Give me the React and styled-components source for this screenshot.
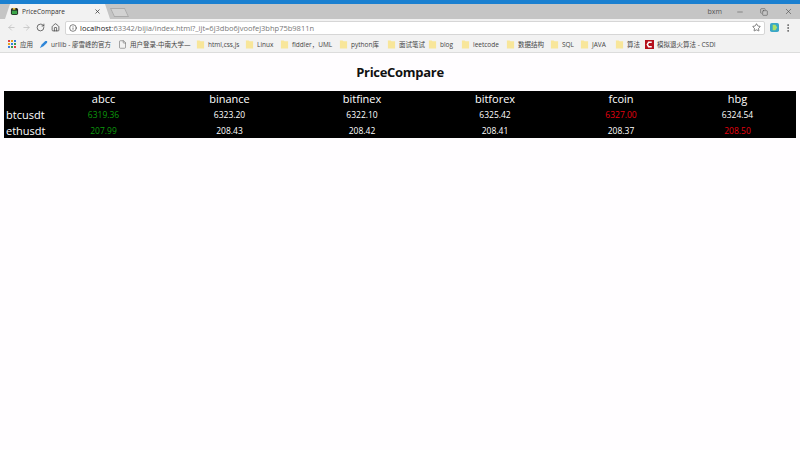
import React from "react";
import styled, { createGlobalStyle } from "styled-components";
import { Star, MoreVertical, RotateCw, Home, ArrowLeft, ArrowRight, Info, Minus, X, Copy, File } from "lucide-react";

const GlobalStyle = createGlobalStyle`
  html, body {
    margin: 0;
    padding: 0;
    background: #fffdff;
    font-family: "Open Sans", "Noto Sans CJK SC", sans-serif;
  }
`;

const Page = styled.div`
  width: 800px;
  height: 450px;
  overflow: hidden;
  display: flex;
  flex-direction: column;
`;
const TitleBar = styled.div`
  height: 15px;
  background: #c5c5c5;
  border-top: 4px solid #1b80d0;
  display: flex;
  align-items: flex-end;
  padding-left: 5px;
`;
const Tab = styled.div`
  width: 105px;
  height: 15px;
  background: #f2f2f2;
  clip-path: polygon(0 100%, 5px 0, 100px 0, 100% 100%);
  display: flex;
  align-items: center;
  padding: 0 9px 0 5px;
  box-sizing: border-box;
  font-size: 6.5px;
  color: #333;
`;
const TabIcon = styled.svg`
  width: 9px;
  height: 9px;
  margin: 0 3px 0 0;
  flex: none;
`;
const TabTitle = styled.span`
  flex: 1;
  white-space: nowrap;
`;
const NewTab = styled.div`
  width: 13px;
  height: 7px;
  margin: 0 0 2px 2px;
  background: #d2d2d2;
  border: 1px solid #aaa;
  transform: skewX(25deg);
`;
const WindowControls = styled.div`
  margin-left: auto;
  height: 15px;
  display: flex;
  align-items: center;
  color: #444;
`;
const UserName = styled.span`
  font-size: 7px;
  color: #555;
  margin-right: 6px;
`;
const ControlButton = styled.span`
  width: 24px;
  display: flex;
  justify-content: center;
`;
const Toolbar = styled.div`
  height: 17px;
  background: #f2f2f2;
  display: flex;
  align-items: center;
  padding-left: 7px;
`;
const NavButton = styled.span`
  width: 14.5px;
  display: flex;
  justify-content: flex-start;
  color: ${(p) => (p.$off ? "#bdbdbd" : "#444")};
`;
const Omnibox = styled.div`
  width: 700px;
  height: 14px;
  background: #fff;
  border: 1px solid #d6d6d6;
  border-radius: 2px;
  box-sizing: border-box;
  display: flex;
  align-items: center;
  padding: 0 3px;
  font-size: 7.5px;
  color: #777;
  white-space: nowrap;
`;
const Host = styled.span`
  color: #222;
  margin-left: 3px;
`;
const OmniStar = styled.span`
  margin-left: auto;
  display: flex;
  color: #444;
`;
const Extension = styled.svg`
  width: 9px;
  height: 9px;
  margin-left: 5px;
`;
const MenuDots = styled.span`
  display: flex;
  margin-left: 4px;
  color: #555;
`;
const BookmarkBar = styled.div`
  height: 16px;
  background: #f2f2f2;
  border-bottom: 1px solid #dcdcdc;
  display: flex;
  align-items: center;
  padding-left: 8px;
  font-size: 6.5px;
  color: #444;
  white-space: nowrap;
`;
const Bookmark = styled.div`
  width: ${(p) => p.$w}px;
  display: flex;
  align-items: center;
  gap: 3px;
  flex: none;
`;
const Folder = styled.svg`
  width: 9px;
  height: 9px;
  flex: none;
`;
const Main = styled.main`
  padding: 0 4px;
`;
const Heading = styled.h1`
  margin: 10px 0 9px;
  font-size: 13px;
  line-height: 19px;
  letter-spacing: -0.3px;
  font-weight: 700;
  color: #111;
  text-align: center;
`;
const PriceTable = styled.table`
  width: 792px;
  height: 47px;
  border-collapse: collapse;
  table-layout: fixed;
  background: #000;
  color: #fff;

  tr > :last-child {
    padding-left: 7px;
  }
`;
const HeadCell = styled.th`
  padding: 0;
  height: 16px;
  font-size: 11px;
  font-weight: 400;
  line-height: 16px;
  text-align: center;
`;
const SymbolCell = styled.td`
  padding: 0 0 0 2px;
  height: 15px;
  font-size: 11px;
  line-height: 15px;
`;
const PriceCell = styled.td`
  padding: 0;
  height: 15px;
  font-size: 8.5px;
  line-height: 15px;
  text-align: center;
  color: ${(p) => (p.$tone === "low" ? "#0c9a0c" : p.$tone === "high" ? "#e8000f" : "#fff")};
`;

const columns = [
  { name: "abcc", width: 103 },
  { name: "binance", width: 149 },
  { name: "bitfinex", width: 116 },
  { name: "bitforex", width: 150 },
  { name: "fcoin", width: 102 },
  { name: "hbg", width: 124 },
];

const rows = [
  {
    symbol: "btcusdt",
    prices: [
      ["6319.36", "low"],
      ["6323.20"],
      ["6322.10"],
      ["6325.42"],
      ["6327.00", "high"],
      ["6324.54"],
    ],
  },
  {
    symbol: "ethusdt",
    prices: [
      ["207.99", "low"],
      ["208.43"],
      ["208.42"],
      ["208.41"],
      ["208.37"],
      ["208.50", "high"],
    ],
  },
];

const bookmarks = [
  { label: "urllib - 廖雪峰的官方", width: 79, icon: "rocket" },
  { label: "用户登录-中南大学—", width: 78, icon: "file" },
  { label: "html,css,js", width: 49 },
  { label: "Linux", width: 35 },
  { label: "fiddler，UML", width: 59 },
  { label: "python库", width: 48 },
  { label: "面试笔试", width: 41 },
  { label: "blog", width: 33 },
  { label: "leetcode", width: 45 },
  { label: "数据结构", width: 44 },
  { label: "SQL", width: 30 },
  { label: "JAVA", width: 35 },
  { label: "算法", width: 30 },
  { label: "模拟退火算法 - CSDI", width: 72, icon: "csdn" },
];

const BookmarkIcon = ({ type }) => {
  if (type === "rocket") {
    return (
      <Folder viewBox="0 0 10 10">
        <path d="M1 9 L3 5 L7 1 L9 1 L9 3 L5 7 Z" fill="#2f86d8" />
      </Folder>
    );
  }
  if (type === "file") return <File size={9} strokeWidth={1.5} color="#666" />;
  if (type === "csdn") {
    return (
      <Folder viewBox="0 0 10 10">
        <rect width="10" height="10" fill="#b5101c" />
        <path d="M7.5 2.6 H4 L2.6 5 L4 7.4 H7.5" fill="none" stroke="#fff" strokeWidth="1.6" />
      </Folder>
    );
  }
  return (
    <Folder viewBox="0 0 10 10">
      <path d="M1 0.5 H4 L5 1.5 H9 V9.5 H1 Z" fill="#f8e69a" />
    </Folder>
  );
};

const AppsIcon = () => (
  <Folder viewBox="0 0 9 9">
    {[0, 3, 6].map((y, r) =>
      [0, 3, 6].map((x, c) => (
        <rect
          key={`${r}${c}`}
          x={x}
          y={y}
          width="2"
          height="2"
          fill={["#d44", "#e9a020", "#3a7de0", "#3a9a50"][(r + c) % 4]}
        />
      ))
    )}
  </Folder>
);

const App = () => (
  <Page>
    <GlobalStyle />
    <TitleBar>
      <Tab>
        <TabIcon viewBox="0 0 10 10">
          <rect x="1" y="1" width="8" height="8" rx="2" fill="#222" />
          <rect x="2" y="4" width="6" height="4" fill="#3ca64a" />
          <rect x="3" y="1" width="3" height="2" fill="#e5c33c" />
        </TabIcon>
        <TabTitle>PriceCompare</TabTitle>
        <X size={7} strokeWidth={2.5} color="#333" />
      </Tab>
      <NewTab />
      <WindowControls>
        <UserName>bxm</UserName>
        <ControlButton><Minus size={8} strokeWidth={1.5} /></ControlButton>
        <ControlButton><Copy size={8} strokeWidth={1.5} /></ControlButton>
        <ControlButton><X size={9} strokeWidth={1.5} /></ControlButton>
      </WindowControls>
    </TitleBar>
    <Toolbar>
      <NavButton $off><ArrowLeft size={9} strokeWidth={2} /></NavButton>
      <NavButton $off><ArrowRight size={9} strokeWidth={2} /></NavButton>
      <NavButton><RotateCw size={9} strokeWidth={2} /></NavButton>
      <NavButton><Home size={9} strokeWidth={2} /></NavButton>
      <Omnibox>
        <Info size={8} strokeWidth={2} color="#444" />
        <Host>localhost</Host>:63342/bijia/index.html?_ijt=6j3dbo6jvoofej3bhp75b9811n
        <OmniStar><Star size={9} strokeWidth={1.8} /></OmniStar>
      </Omnibox>
      <Extension viewBox="0 0 10 10">
        <rect width="10" height="10" rx="2" fill="#3aa7c8" />
        <path d="M3 2 H6 L8 5 L6 8 H3 Z" fill="#a9e06a" />
      </Extension>
      <MenuDots><MoreVertical size={10} strokeWidth={2} /></MenuDots>
    </Toolbar>
    <BookmarkBar>
      <Bookmark $w={31}>
        <AppsIcon />
        应用
      </Bookmark>
      {bookmarks.map((b) => (
        <Bookmark key={b.label} $w={b.width}>
          <BookmarkIcon type={b.icon} />
          {b.label}
        </Bookmark>
      ))}
    </BookmarkBar>
    <Main>
      <Heading>PriceCompare</Heading>
      <PriceTable>
        <colgroup>
          <col style={{ width: 48 }} />
          {columns.map((c) => (
            <col key={c.name} style={{ width: c.width }} />
          ))}
        </colgroup>
        <thead>
          <tr>
            <HeadCell />
            {columns.map((c) => (
              <HeadCell key={c.name}>{c.name}</HeadCell>
            ))}
          </tr>
        </thead>
        <tbody>
          {rows.map((row) => (
            <tr key={row.symbol}>
              <SymbolCell>{row.symbol}</SymbolCell>
              {row.prices.map(([value, tone], i) => (
                <PriceCell key={columns[i].name} $tone={tone}>
                  {value}
                </PriceCell>
              ))}
            </tr>
          ))}
        </tbody>
      </PriceTable>
    </Main>
  </Page>
);

export default App;
